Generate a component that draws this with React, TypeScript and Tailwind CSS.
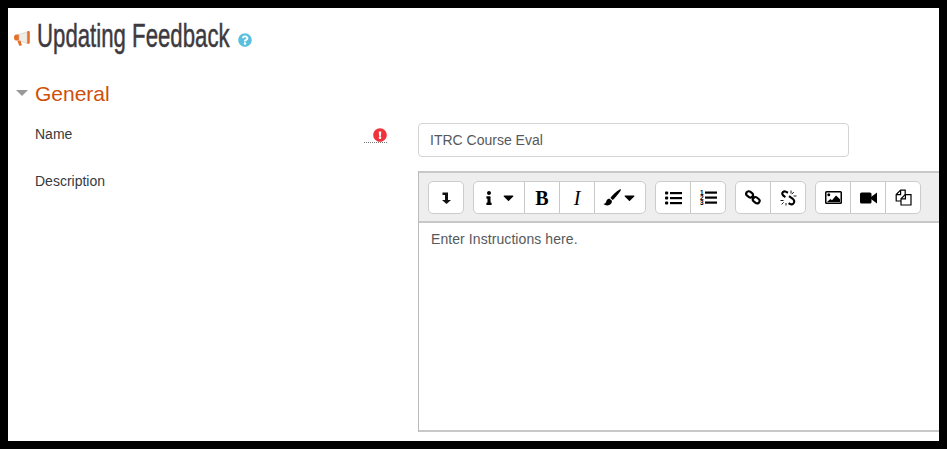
import React from "react";
import { FaCaretDown, FaInfo, FaQuestionCircle, FaExclamationCircle } from "react-icons/fa";

function Btn({ children, w = 35, last = false }: { children: React.ReactNode; w?: number; last?: boolean }) {
  return (
    <div
      style={{ width: w }}
      className={`h-[31px] flex items-center justify-center text-black ${last ? "" : "border-r border-[#c8c8c8]"}`}
    >
      {children}
    </div>
  );
}

function Group({ children }: { children: React.ReactNode }) {
  return <div className="flex bg-white border border-[#ccc] rounded-[5px] h-[33px] mr-[9px]">{children}</div>;
}

function ListUl() {
  return (
    <svg width="17" height="14" viewBox="0 0 17 14" fill="#000">
      <rect x="0" y="0.5" width="3.2" height="3" rx="1" />
      <rect x="0" y="5.5" width="3.2" height="3" rx="1" />
      <rect x="0" y="10.5" width="3.2" height="3" rx="1" />
      <rect x="5" y="1" width="12" height="2.2" />
      <rect x="5" y="6" width="12" height="2.2" />
      <rect x="5" y="11" width="12" height="2.2" />
    </svg>
  );
}

function ListOl() {
  return (
    <svg width="17" height="15" viewBox="0 0 17 15" fill="#000">
      <text x="0" y="5" fontSize="6.5" fontWeight="700" fontFamily="Liberation Sans, sans-serif">1</text>
      <text x="0" y="10" fontSize="6.5" fontWeight="700" fontFamily="Liberation Sans, sans-serif">2</text>
      <text x="0" y="15" fontSize="6.5" fontWeight="700" fontFamily="Liberation Sans, sans-serif">3</text>
      <rect x="5" y="1.5" width="12" height="2.2" />
      <rect x="5" y="6.5" width="12" height="2.2" />
      <rect x="5" y="11.5" width="12" height="2.2" />
    </svg>
  );
}

function LinkIcon() {
  return (
    <svg width="16" height="15" viewBox="0 0 16 15" fill="none" stroke="#000" strokeWidth="2.1">
      <rect x="-3.6" y="-2.5" width="7.2" height="5" rx="2.4" transform="translate(4.6 4.4) rotate(38)" />
      <rect x="-3.6" y="-2.5" width="7.2" height="5" rx="2.4" transform="translate(11.2 10.2) rotate(38)" />
      <path d="M6.5 6l3 2.6" />
    </svg>
  );
}

function UnlinkIcon() {
  return (
    <svg width="17" height="16" viewBox="0 0 17 16" fill="none" stroke="#000">
      <path d="M8 2.8 L5.2 1.4 C3.5 1 2 2.5 2.3 4 C2.5 5 3.5 6 5.4 7.2" strokeWidth="2.1" />
      <path d="M9 6.2 L12.5 8.5 C14.5 10 14.7 12 13.4 13.4 C12.2 14.6 10.4 14.5 8.6 13.2" strokeWidth="2.1" />
      <path d="M11 0.5v3M13.8 2l-2 2.2M16.5 6h-3M0.5 10.5h3M1.6 14.4l2-2M6 15.5v-2.5" strokeWidth="0.9" />
    </svg>
  );
}

function ImageIcon() {
  return (
    <svg width="17" height="13" viewBox="0 0 17 13">
      <rect x="0.75" y="0.75" width="15.5" height="11.5" rx="0.8" fill="#fff" stroke="#000" strokeWidth="1.5" />
      <circle cx="3.8" cy="3.8" r="1.5" fill="#000" />
      <path d="M2 11l3.4-3 1.6 1.2L11 4.6l4 3.6V11z" fill="#000" />
    </svg>
  );
}

function VideoIcon() {
  return (
    <svg width="17" height="12" viewBox="0 0 17 12" fill="#000">
      <rect x="0" y="0.5" width="11.5" height="11" rx="1.6" />
      <path d="M11 5l6-4.5v11L11 7z" />
    </svg>
  );
}

function CopyIcon() {
  return (
    <svg width="17" height="17" viewBox="0 0 17 17" fill="none" stroke="#000" strokeWidth="1.2">
      <path d="M6 12H1.2V5.6L5.6 1.2H10.2V5.6" fill="#fff" />
      <path d="M5.6 1.2V5.6H1.2" />
      <path d="M6 16V9.8L10.2 5.6H16V16Z" fill="#fff" />
      <path d="M10.4 5.6V9.8H6" />
    </svg>
  );
}

function BrushIcon() {
  return (
    <svg width="18" height="17" viewBox="0 0 17 16" fill="#000">
      <path d="M16.4 0.3C15 0.5 9.6 5 7 8.4L9.2 10.4C12 7.6 16.6 2 16.9 0.8 17 0.4 16.7 0.2 16.4 0.3Z" />
      <path d="M6.2 9.2C3.6 9.2 3.4 11 2.8 12.6 2.4 13.6 1.4 14 0.4 14.2 2 15.6 4.4 16 6.4 14.8 8.2 13.8 8.8 12 8.2 10.8Z" />
    </svg>
  );
}

function Megaphone() {
  return (
    <svg width="17" height="15" viewBox="0 0 17 15" className="mt-[5px]">
      <path d="M2.2 3.4H5V9.6H2.2C0.6 9.6 0 8.2 0 6.5S0.6 3.4 2.2 3.4Z" fill="#e5702a" />
      <path d="M5 3.4 L13.2 1V12.5L5 9.6Z" fill="#f0ece6" stroke="#c9c3ba" strokeWidth="0.5" />
      <path d="M13.2 0.4C14.2-0.2 15.8 0 15.8 1.4V11.6C15.8 13 14.2 13.2 13.2 12.6Z" fill="#e5702a" />
      <path d="M3.4 9.8H6.6L7.8 14C7.8 14.6 5.6 15.2 5 14.2Z" fill="#e5702a" />
    </svg>
  );
}

export default function App() {
  return (
    <div className="w-[947px] h-[449px] bg-black p-2 overflow-hidden font-['Liberation_Sans',sans-serif]">
      <div className="w-[931px] h-[433px] bg-white overflow-hidden">
        <div className="flex items-center h-[55px] pl-[6px]">
          <Megaphone />
          <div className="ml-[6px] w-[192px] h-[36px] overflow-visible">
            <span className="block w-[300px] whitespace-nowrap origin-left scale-x-[0.673] text-[33px] leading-[36px] text-[#3d3a3f] [-webkit-text-stroke:0.5px_#3d3a3f]">
              Updating Feedback
            </span>
          </div>
          <FaQuestionCircle className="ml-[9px] mt-[8px] text-[#5bc0de]" size={14} />
        </div>

        <div className="flex items-center h-[24px] mt-[18px] pl-[8px]">
          <div className="w-0 h-0 border-l-[6px] border-r-[6px] border-t-[6px] border-l-transparent border-r-transparent border-t-[#999]" />
          <span className="ml-[7px] text-[21px] leading-none text-[#ce4f0a]">General</span>
        </div>

        <div className="flex mt-[21px]">
          <div className="w-[410px] flex justify-between pl-[27px] pr-[31px]">
            <span className="text-[14px] leading-[20px] text-[#373a3c] -mt-[2px]">Name</span>
            <div className="h-[17px] w-[23px] flex justify-center border-b border-dotted border-[#777]">
              <FaExclamationCircle className="text-[#f0333a] mt-[2px] ml-[8px]" size={14} />
            </div>
          </div>
          <div className="w-[431px] h-[34px] -mt-[3px] border border-[#d4d4d4] rounded-[4px] px-[11px] flex items-center text-[14px] text-[#55595c]">
            ITRC Course Eval
          </div>
        </div>

        <div className="flex mt-[14px]">
          <div className="w-[410px] pl-[27px] text-[14px] leading-[20px] text-[#373a3c]">Description</div>
          <div className="flex-1 min-w-0 border-l border-[#bbb]">
            <div className="h-[52px] bg-[#eee] border-t-2 border-b-2 border-[#c8c8c8] pl-[9px] pt-[8px] flex items-start">
              <Group>
                <Btn w={34} last>
                  <svg width="11" height="15" viewBox="0 0 11 14">
                    <path d="M1.5 2h5.5v7.5H10L5.5 13.5 1 9.5h3V4.5H1.5z" fill="#111" />
                  </svg>
                </Btn>
              </Group>
              <Group>
                <Btn w={51}>
                  <FaInfo size={14} />
                  <FaCaretDown size={17} className="ml-[4px]" />
                </Btn>
                <Btn>
                  <span className="font-['Liberation_Serif',serif] font-bold text-[20px] leading-none">B</span>
                </Btn>
                <Btn>
                  <span className="font-['Liberation_Serif',serif] italic text-[20px] leading-none">I</span>
                </Btn>
                <Btn w={50} last>
                  <BrushIcon />
                  <FaCaretDown size={17} />
                </Btn>
              </Group>
              <Group>
                <Btn><ListUl /></Btn>
                <Btn w={34} last><ListOl /></Btn>
              </Group>
              <Group>
                <Btn><LinkIcon /></Btn>
                <Btn w={34} last><UnlinkIcon /></Btn>
              </Group>
              <Group>
                <Btn><ImageIcon /></Btn>
                <Btn><VideoIcon /></Btn>
                <Btn w={34} last><CopyIcon /></Btn>
              </Group>
            </div>
            <div className="h-[209px] border-b-2 border-[#c8c8c8] px-3 py-[6px] text-[14px] leading-[20px] tracking-[0.08px] text-[#55595c]">
              Enter Instructions here.
            </div>
          </div>
        </div>
      </div>
    </div>
  );
}
